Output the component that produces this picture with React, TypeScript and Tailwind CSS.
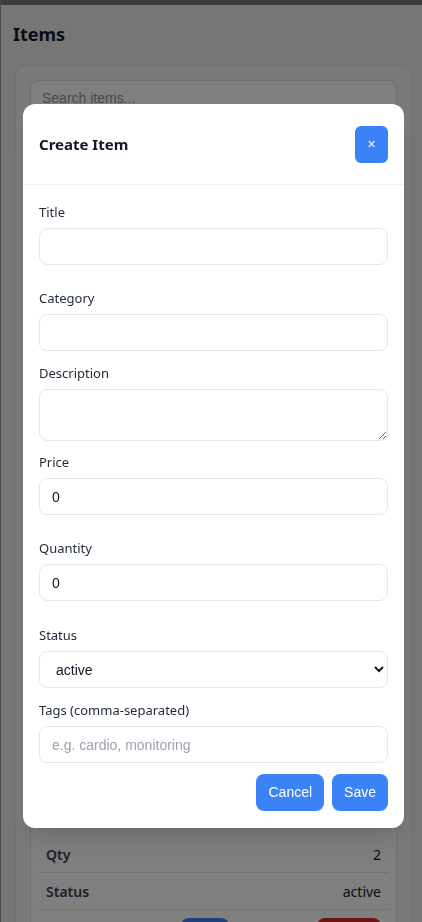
import React from "react";

const sans = { fontFamily: '"Noto Sans", "Liberation Sans", sans-serif' };

function Field({ label, children, className = "" }: { label: string; children: React.ReactNode; className?: string }) {
  return (
    <div className={className}>
      <label className="block text-[13px] leading-[20px] text-[#1f2937]">{label}</label>
      <div className="mt-[6px]">{children}</div>
    </div>
  );
}

const inputCls =
  "block w-full h-[37px] rounded-[8px] border border-[#e5e7eb] bg-white px-[12px] text-[14px] text-[#111827] outline-none placeholder:text-[#9ca3af] font-['Liberation_Sans',Arial,sans-serif]";

export default function App() {
  return (
    <div className="relative h-[922px] w-full overflow-hidden bg-[#ececec] text-[#111827]" style={sans}>
      {/* background page */}
      <div className="pl-[13px] pr-[8px] pt-[20px]">
        <h1 className="text-[18px] font-bold leading-[28px] text-[#111827]">Items</h1>
        <div className="mt-[17px] mx-[2px] rounded-[10px] border border-[#e2e2e2] bg-[#f4f4f4] px-[14px] pt-[14px]">
          <input
            className="block h-[36px] w-full rounded-[8px] border border-[#dcdcdc] bg-white px-[11px] text-[14px] font-['Liberation_Sans',Arial,sans-serif]"
            placeholder="Search items..."
          />
          <div className="mt-[12px] rounded-[8px] border border-[#e2e2e2] bg-white px-[7px] pt-[707px]">
            <div className="flex h-[37px] items-center justify-between border-b border-[#e5e7eb] px-[8px] text-[14px]">
              <span className="font-semibold text-[#374151]">Qty</span>
              <span className="text-[#111827]">2</span>
            </div>
            <div className="flex h-[37px] items-center justify-between border-b border-[#e5e7eb] px-[8px] text-[14px]">
              <span className="font-semibold text-[#374151]">Status</span>
              <span className="text-[#111827]">active</span>
            </div>
            <div className="flex justify-end gap-[88px] px-[8px] pt-[8px] pb-[8px]">
              <button className="h-[32px] w-[48px] rounded-[8px] bg-[#3b82f6]"></button>
              <button className="h-[32px] w-[64px] rounded-[8px] bg-[#dc2626]"></button>
            </div>
          </div>
        </div>
      </div>

      {/* overlay */}
      <div className="fixed inset-0 bg-black/50"></div>
      <div className="fixed left-0 right-0 top-0 h-[5px] bg-[#3c3c3c]"></div>
      <div className="fixed left-0 top-0 bottom-0 w-[1px] bg-[#4a4a4a]"></div>

      {/* modal */}
      <div className="fixed left-[23px] top-[104px] w-[381px] rounded-[12px] bg-white shadow-xl">
        <div className="flex items-center justify-between border-b border-[#eef0f4] px-[16px] pt-[22px] pb-[21px]">
          <h2 className="text-[15px] font-bold text-[#111827]">Create Item</h2>
          <button className="flex h-[37px] w-[33px] items-center justify-center rounded-[6px] bg-[#3b82f6] text-[14px] text-white font-['Liberation_Sans',Arial,sans-serif]">
            ×
          </button>
        </div>
        <div className="px-[16px] pt-[17px] pb-[17px]">
          <Field label="Title">
            <input className={inputCls} />
          </Field>
          <Field label="Category" className="mt-[23px]">
            <input className={inputCls} />
          </Field>
          <Field label="Description" className="mt-[12px]">
            <textarea className="block h-[52px] w-full rounded-[8px] border border-[#e5e7eb] bg-white px-[12px] py-[10px] text-[14px] outline-none" />
          </Field>
          <Field label="Price" className="mt-[11px]">
            <input className={inputCls} defaultValue="0" />
          </Field>
          <Field label="Quantity" className="mt-[23px]">
            <input className={inputCls} defaultValue="0" />
          </Field>
          <Field label="Status" className="mt-[24px]">
            <select className="block h-[37px] w-full rounded-[8px] border border-[#e5e7eb] bg-white pl-[12px] pr-[8px] text-[14px] text-[#111827] font-['Liberation_Sans',Arial,sans-serif] outline-none">
              <option>active</option>
              <option>inactive</option>
            </select>
          </Field>
          <Field label="Tags (comma-separated)" className="mt-[12px]">
            <input className={inputCls} placeholder="e.g. cardio, monitoring" />
          </Field>
          <div className="mt-[11px] flex justify-end gap-[8px]">
            <button className="h-[37px] rounded-[8px] bg-[#3b82f6] px-[12px] text-[14px] text-white font-['Liberation_Sans',Arial,sans-serif]">
              Cancel
            </button>
            <button className="h-[37px] rounded-[8px] bg-[#3b82f6] px-[12px] text-[14px] text-white font-['Liberation_Sans',Arial,sans-serif]">
              Save
            </button>
          </div>
        </div>
      </div>
    </div>
  );
}
